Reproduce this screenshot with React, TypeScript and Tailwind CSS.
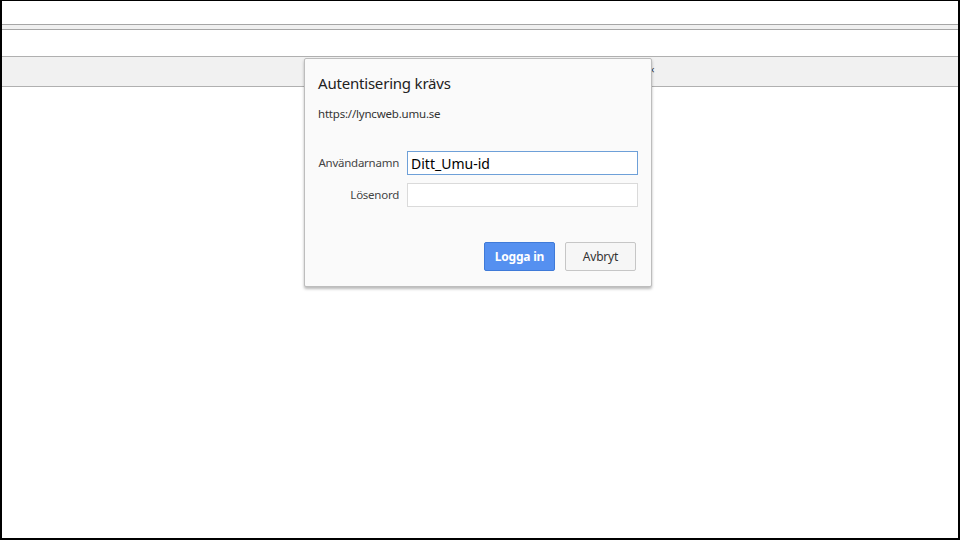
import React from 'react'

const font = { fontFamily: '"Noto Sans", "Open Sans", sans-serif' }

const AuthDialog: React.FC = () => {
    return (
        <div
            className="absolute left-[302px] top-[57px] w-[348px] h-[229px] bg-[#fafafa] border border-[#bdbdbd] rounded-[2px] shadow-[0_2px_3px_rgba(0,0,0,0.28)] pl-[13px] pr-[13px] pt-[14px]"
            style={font}
        >
            <div className="text-[15px] leading-[20px] text-[#222] tracking-[-0.2px]">Autentisering krävs</div>
            <div className="mt-[13px] text-[11.5px] leading-[16px] text-[#333] tracking-[-0.2px]">https://lyncweb.umu.se</div>

            <div className="mt-[29px] flex flex-col gap-[8px]">
                <div className="flex items-center">
                    <label className="w-[81px] text-right text-[11.5px] text-[#444] whitespace-nowrap tracking-[-0.25px]">Användarnamn</label>
                    <input
                        className="ml-[8px] w-[231px] h-[24px] border border-[#6ea0d8] bg-white px-[3px] text-[14px] text-black outline-none"
                        style={font}
                        defaultValue="Ditt_Umu-id"
                    />
                </div>
                <div className="flex items-center">
                    <label className="w-[81px] text-right text-[11.5px] text-[#444] whitespace-nowrap tracking-[-0.25px]">Lösenord</label>
                    <input
                        type="password"
                        className="ml-[8px] w-[231px] h-[24px] border border-[#dadada] bg-white px-[3px] text-[14px] outline-none"
                    />
                </div>
            </div>

            <div className="mt-[35px] flex justify-end gap-[10px] pr-[2px]">
                <button className="w-[71px] h-[29px] rounded-[2px] bg-[#5590f0] border border-[#3f7ad8] text-white text-[12px] font-bold tracking-[-0.2px]" style={font}>
                    Logga in
                </button>
                <button className="w-[71px] h-[29px] rounded-[2px] bg-[#f6f6f6] border border-[#c6c6c6] text-[#333] text-[12px] tracking-[-0.2px]" style={font}>
                    Avbryt
                </button>
            </div>
        </div>
    )
}

export default function App() {
    return (
        <div className="relative w-[960px] h-[540px] bg-white border-black border-t border-l-2 border-r-2 border-b-2 overflow-hidden">
            <div className="h-[23px]" />
            <div className="h-[6px] bg-[#f0f0f0] border-y border-[#a6a6a6]" />
            <div className="h-[26px]" />
            <div className="relative h-[31px] bg-[#f1f1f1] border-y border-[#b0b0b0]">
                <span className="absolute left-[647px] top-[6px] text-[10px] text-[#333]" style={font}>×</span>
            </div>
            <AuthDialog />
        </div>
    )
}
